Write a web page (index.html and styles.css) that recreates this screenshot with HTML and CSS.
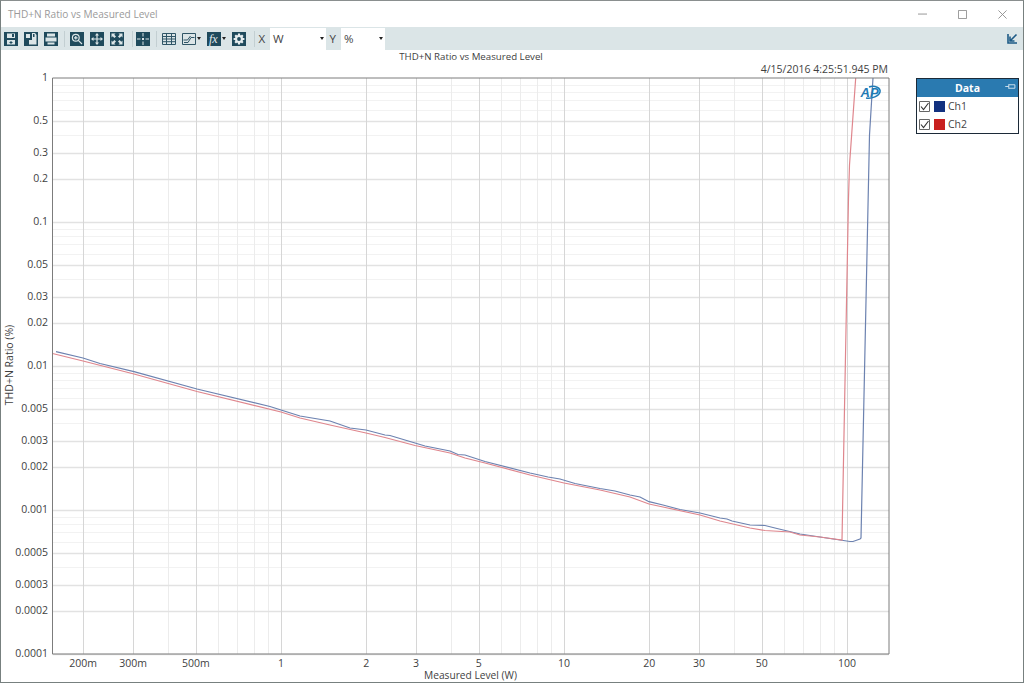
FILE: index.html
```html
<!DOCTYPE html>
<html>

<head>
    <title>THD+N Ratio vs Measured Level</title>
    <link rel="stylesheet" href="styles.css">
</head>

<body>
    <div class="window">
        <div class="titleBar">
            <span class="titleText">THD+N Ratio vs Measured Level</span>
            <div class="windowButtons">
                <svg class="winBtn" viewBox="0 0 10 10"><path d="M0 4.5H10" /></svg>
                <svg class="winBtn" viewBox="0 0 10 10"><path d="M.5 .5H9.5V9.5H.5Z" /></svg>
                <svg class="winBtn" viewBox="0 0 10 10"><path d="M.5 .5L9.5 9.5M9.5 .5L.5 9.5" /></svg>
            </div>
        </div>

        <div class="toolBar">
            <!-- save data -->
            <svg class="tool" viewBox="0 0 14 14"><path class="dark" d="M0 0H14V14H0Z" /><path class="light" d="M3 1.5H11V6H3ZM3 8H11V12.5H3Z" /><path class="dark" d="M8 2H10V5H8ZM6.5 9H7.5V10H8.5V11H7.5V12H6.5V11H5.5V10H6.5Z" /></svg>
            <!-- save as -->
            <svg class="tool" viewBox="0 0 14 14"><path class="dark" d="M0 0H14V14H0Z" /><path class="light" d="M2 2H6V6H2ZM8 1H11L12.5 3V12.5H5V8H8Z" /><path class="dark" d="M9 2H10.5V5H9Z" /></svg>
            <!-- print -->
            <svg class="tool" viewBox="0 0 14 14"><path class="dark" d="M0 0H14V14H0Z" /><path class="light" d="M3 1.5H11V4.5H3ZM1.5 5.5H12.5V9.5H1.5ZM3.5 10.5H10.5V12.5H3.5Z" /></svg>
            <div class="sep"></div>
            <!-- zoom -->
            <svg class="tool" viewBox="0 0 14 14"><path class="dark" d="M0 0H14V14H0Z" /><circle class="lens" cx="5.8" cy="5.8" r="3.4" /><path class="lens" d="M8.3 8.3L12 12M4 5.8H7.6M5.8 4V7.6" /></svg>
            <!-- pan -->
            <svg class="tool" viewBox="0 0 14 14"><path class="dark" d="M0 0H14V14H0Z" /><path class="light" d="M7 1L9 3.5H7.6V6.4H10.5V5L13 7L10.5 9V7.6H7.6V10.5H9L7 13L5 10.5H6.4V7.6H3.5V9L1 7L3.5 5V6.4H6.4V3.5H5Z" /></svg>
            <!-- fit -->
            <svg class="tool" viewBox="0 0 14 14"><path class="dark" d="M0 0H14V14H0Z" /><path class="light" d="M1.5 1.5H5.5L4.3 2.7L6 4.4L4.4 6L2.7 4.3L1.5 5.5ZM12.5 1.5V5.5L11.3 4.3L9.6 6L8 4.4L9.7 2.7L8.5 1.5ZM1.5 12.5V8.5L2.7 9.7L4.4 8L6 9.6L4.3 11.3L5.5 12.5ZM12.5 12.5H8.5L9.7 11.3L8 9.6L9.6 8L11.3 9.7L12.5 8.5Z" /></svg>
            <div class="sep wide"></div>
            <!-- cursor -->
            <svg class="tool" viewBox="0 0 14 14"><path class="dark" d="M0 0H14V14H0Z" /><path class="light" d="M6.5 1H7.5V4.5H6.5ZM6.5 9.5H7.5V13H6.5ZM1 6.5H4.5V7.5H1ZM9.5 6.5H13V7.5H9.5ZM6 6H8V8H6Z" /></svg>
            <div class="sep"></div>
            <!-- table -->
            <svg class="tool" viewBox="0 0 14 14"><path class="grid" d="M.5 1.5H13.5V12.5H.5ZM.5 4.5H13.5M.5 7H13.5M.5 9.7H13.5M4.5 1.5V12.5M9.5 1.5V12.5" /></svg>
            <!-- graph -->
            <svg class="tool" viewBox="0 0 14 14"><path class="grid" d="M.5 1.5H13.5V12.5H.5Z" /><path class="grid" d="M2 10.5H6L9 5.5H12.5M1.5 8H5.5L8.5 4" /></svg>
            <span class="caret"></span>
            <!-- functions -->
            <svg class="tool" viewBox="0 0 14 14"><path class="dark" d="M0 0H14V14H0Z" /><text class="fxText" x="2" y="11">fx</text></svg>
            <span class="caret"></span>
            <!-- settings -->
            <svg class="tool" viewBox="0 0 14 14"><path class="dark" d="M0 0H14V14H0Z" /><circle class="gear" cx="7" cy="7" r="4" /><path class="gearTeeth" d="M7 1.6V12.4M1.6 7H12.4M3.2 3.2L10.8 10.8M10.8 3.2L3.2 10.8" /><circle class="dark" cx="7" cy="7" r="1.9" /></svg>
            <div class="sep wide"></div>
            <span class="axisLabel">X</span>
            <div class="combo comboX">W<span class="caret"></span></div>
            <span class="axisLabel">Y</span>
            <div class="combo comboY">%<span class="caret"></span></div>
            <svg class="popOut" viewBox="0 0 11 11"><path d="M1 1V10H10M9.5 1.5L3.5 7.5M3 3.5V8H7.5" /></svg>
        </div>

        <div class="content">
            <svg id="chart" class="chart" viewBox="1 50 905 632"></svg>
            <div class="legend">
                <div class="legendHead">
                    <span>Data</span>
                    <svg class="pin" viewBox="0 0 12 8"><path d="M0 4H4M4 1.5V6.5M4 2H11V6H4" /></svg>
                </div>
                <div class="legendRow">
                    <svg class="check" viewBox="0 0 11 11"><path class="box" d="M.5 .5H10.5V10.5H.5Z" /><path class="tick" d="M2 5.5L4.5 8.5L9.5 2" /></svg>
                    <span class="swatch ch1"></span>Ch1
                </div>
                <div class="legendRow">
                    <svg class="check" viewBox="0 0 11 11"><path class="box" d="M.5 .5H10.5V10.5H.5Z" /><path class="tick" d="M2 5.5L4.5 8.5L9.5 2" /></svg>
                    <span class="swatch ch2"></span>Ch2
                </div>
            </div>
        </div>
    </div>
    <script src="chart.js"></script>
</body>

</html>
```

FILE: styles.css
```css
* {
    box-sizing: border-box;
}

body {
    margin: 0;
    background-color: #fff;
    font-family: "Open Sans", "Noto Sans", sans-serif;
    color: #3a3a3a;
}

.window {
    width: 1024px;
    height: 683px;
    border: 1px solid #77807f;
    border-top-color: #8a8f8f;
    display: flex;
    flex-direction: column;
    overflow: hidden;
}

.titleBar {
    height: 26px;
    display: flex;
    align-items: center;
    justify-content: space-between;
    padding-left: 7px;
}

.titleText {
    font-size: 10.1px;
    color: #9a9a9a;
}

.windowButtons {
    display: flex;
    gap: 31px;
    padding-right: 16px;
    padding-top: 1px;
}

.winBtn {
    width: 9px;
    height: 9px;
    fill: none;
    stroke: #8d8d8d;
    stroke-width: 1;
}

.toolBar {
    height: 23px;
    flex: none;
    display: flex;
    align-items: center;
    background-color: #dbe5e7;
}

.tool {
    width: 14px;
    height: 14px;
    margin: 0 3px;
    flex: none;
}

.dark {
    fill: #1f4a5c;
}

.light {
    fill: #dbe5e7;
}

.lens {
    fill: none;
    stroke: #dbe5e7;
    stroke-width: 1.2;
}

.grid {
    fill: none;
    stroke: #2f5566;
    stroke-width: 1;
}

.gear {
    fill: #e6edef;
}

.gearTeeth {
    stroke: #e6edef;
    stroke-width: 2.2;
}

.fxText {
    font-family: "Liberation Serif", serif;
    font-style: italic;
    font-size: 12px;
    fill: #e6edef;
}

.sep {
    width: 1px;
    height: 16px;
    margin: 0 2px 0 3px;
    background-color: #c3cfd2;
    flex: none;
}

.sep.wide {
    margin: 0 0 0 5px;
}

.caret {
    width: 0;
    height: 0;
    margin: 0 3px 0 -2px;
    border-left: 2.5px solid transparent;
    border-right: 2.5px solid transparent;
    border-top: 3px solid #222;
    flex: none;
}

.axisLabel {
    width: 15px;
    padding-left: 3.5px;
    font-size: 11.5px;
    color: #444;
    flex: none;
}

.combo {
    height: 22px;
    background-color: #fff;
    display: flex;
    align-items: center;
    justify-content: space-between;
    padding-left: 3px;
    padding-right: 2px;
    font-size: 11.5px;
    color: #444;
    flex: none;
}

.combo .caret {
    margin: 0;
}

.comboX {
    width: 56px;
}

.comboY {
    width: 44px;
}

.popOut {
    width: 11px;
    height: 11px;
    margin-left: auto;
    margin-right: 5px;
    fill: none;
    stroke: #1d5a86;
    stroke-width: 1.6;
}

.content {
    flex: 1;
    display: flex;
    align-items: flex-start;
}

.chart {
    width: 905px;
    height: 632px;
    flex: none;
}

.chart text {
    font-size: 10.5px;
    fill: #3f3f3f;
}

.chart text.chartTitle {
    font-size: 9.7px;
}

.chart text.xTitle {
    font-size: 10.2px;
}

.chart text.logoText {
    font-family: "Liberation Sans", sans-serif;
    font-style: italic;
    font-weight: bold;
    font-size: 13px;
    fill: #1f7ab5;
}

.legend {
    width: 103px;
    height: 56px;
    margin-top: 28px;
    margin-left: 10px;
    border: 1px solid #1c2a38;
    flex: none;
    font-size: 10.5px;
}

.legendHead {
    height: 18px;
    background-color: #2a7ab0;
    color: #fff;
    font-weight: bold;
    display: flex;
    align-items: center;
    justify-content: center;
    position: relative;
}

.pin {
    width: 11px;
    height: 7px;
    position: absolute;
    top: 4px;
    right: 2px;
    fill: none;
    stroke: #dbe9f2;
    stroke-width: 1;
}

.legendRow {
    height: 18px;
    display: flex;
    align-items: center;
    padding-left: 2px;
    color: #444;
}

.check {
    width: 11px;
    height: 11px;
    margin-right: 4px;
    fill: none;
}

.box {
    stroke: #666;
}

.tick {
    stroke: #333;
    stroke-width: 1.1;
}

.swatch {
    width: 11px;
    height: 11px;
    margin-right: 3px;
}

.ch1 {
    background-color: #12317f;
}

.ch2 {
    background-color: #c8201f;
}
```

FILE: chart.js
```js
const chart = document.getElementById('chart');

// plot area in page pixels
const left = 52.5, right = 889, top_ = 78, bottom = 654;
const xOf = (v) => 281 + 283 * Math.log10(v);
const yOf = (v) => 78 - 144 * Math.log10(v);

// traced from the measurement, in page pixels
const ch1 = [[56, 351.7], [83, 358], [100, 363.5], [134, 371.7], [197, 389], [270, 406.5], [281, 410], [300, 416], [330, 421], [350, 428], [366, 430], [385, 435], [390, 435.5], [415, 443], [425, 446], [450, 451], [458, 454.5], [465, 455], [485, 461.5], [530, 473], [548, 477], [560, 479], [575, 483.5], [600, 488.5], [615, 491], [630, 495], [640, 497], [649, 501.7], [663, 505], [680, 509.5], [700, 513], [720, 518], [727, 519], [732, 521], [750, 525], [765, 525.5], [777, 528.5], [800, 534], [820, 537], [840, 540], [850, 541.5], [853, 541.5], [860, 539], [861, 538], [869.5, 135], [873, 78]];
const ch2 = [[52.5, 353.5], [83, 361], [134, 374], [197, 391.5], [281, 412], [300, 418], [330, 425], [366, 433], [385, 437.5], [415, 445.5], [450, 453], [465, 458], [485, 463], [530, 475], [564, 483], [600, 490], [630, 497], [649, 504], [663, 507], [700, 515], [720, 521], [750, 528], [765, 530.5], [790, 532], [800, 535], [820, 537], [842, 540], [848.5, 198], [849.5, 165], [855.7, 78]];

let out = '';

const line = (x1, y1, x2, y2, color, width) => {
    out += `<line x1="${x1}" y1="${y1}" x2="${x2}" y2="${y2}" stroke="${color}" stroke-width="${width}"/>`;
};

const label = (x, y, text, anchor, cls) => {
    out += `<text class="${cls || ''}" x="${x}" y="${y}" text-anchor="${anchor}">${text}</text>`;
};

// grid, minor lines first so the labelled ones sit on top
const major = [1, 2, 3, 5];
[false, true].forEach((isMajor) => {
    for (let exp = -4; exp < 0; exp++) {
        for (let d = 1; d < 10; d++) {
            if (major.includes(d) !== isMajor) continue;
            const y = Math.round(yOf(d * Math.pow(10, exp))) + 0.5;
            line(left, y, right, y, isMajor ? '#e2e2e2' : '#f2f2f2', isMajor ? 1.5 : 1);
        }
    }
    for (let exp = -1; exp < 3; exp++) {
        for (let d = 1; d < 10; d++) {
            const v = d * Math.pow(10, exp);
            const x = Math.round(xOf(v)) + 0.5;
            if (major.includes(d) !== isMajor || x < left || x > right) continue;
            line(x, top_, x, bottom, isMajor ? '#d6d6d6' : '#ececec', 1);
        }
    }
});

const path = (points, color) => {
    out += `<polyline fill="none" stroke="${color}" stroke-width="1.2" points="${points.map((p) => p.join(',')).join(' ')}"/>`;
};
path(ch1, '#6c82b0');
path(ch2, '#df868d');

// plot frame
out += `<path d="M${left} ${top_}H${right}V${bottom}H${left}Z" fill="none" stroke="#7c7c7c"/>`;

// y axis
['1', '0.5', '0.3', '0.2', '0.1', '0.05', '0.03', '0.02', '0.01', '0.005', '0.003', '0.002', '0.001', '0.0005', '0.0003', '0.0002', '0.0001'].forEach((t) => {
    label(48, yOf(Number(t)) + 3, t, 'end');
});

// x axis
[['200m', 0.2], ['300m', 0.3], ['500m', 0.5], ['1', 1], ['2', 2], ['3', 3], ['5', 5], ['10', 10], ['20', 20], ['30', 30], ['50', 50], ['100', 100]].forEach((t) => {
    label(xOf(t[1]), 666.5, t[0], 'middle');
});

// titles
label(471, 60, 'THD+N Ratio vs Measured Level', 'middle', 'chartTitle');
label(888, 73, '4/15/2016 4:25:51.945 PM', 'end');
label(470.5, 678.5, 'Measured Level (W)', 'middle', 'xTitle');
out += `<text transform="translate(13 365) rotate(-90)" text-anchor="middle">THD+N Ratio (%)</text>`;

// AP logo over the plot
out += `<path d="M869 87C875 85 881 88 880 92C879 96 872 99 866 98" fill="none" stroke="#1f7ab5" stroke-width="1.5"/>`;
out += `<text class="logoText" x="860.5" y="97">AP</text>`;

chart.innerHTML = out;
```
